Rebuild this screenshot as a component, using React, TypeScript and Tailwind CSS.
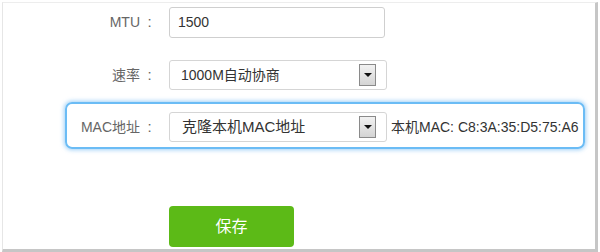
import React from "react";

const font = { fontFamily: '"Liberation Sans", "Noto Sans CJK SC", sans-serif' };

function Arrow() {
  return (
    <div className="absolute right-[10px] top-1/2 -translate-y-1/2 w-[17px] h-[22px] border border-[#8a8a8a] bg-gradient-to-b from-[#f2f2f2] to-[#d4d4d4] flex items-center justify-center">
      <div className="w-0 h-0 border-l-[4px] border-r-[4px] border-t-[4px] border-l-transparent border-r-transparent border-t-[#111]" />
    </div>
  );
}

function Label({ text }: { text: string }) {
  return (
    <div className="w-[92px] h-[30px] flex items-center justify-end text-[14px] text-[#666]">
      <span>{text}</span>
      <span className="w-[19px] text-center text-[15px]">:</span>
    </div>
  );
}

export default function App() {
  return (
    <div className="w-[600px] h-[252px] bg-white pt-[2px] pl-[2px] overflow-hidden" style={font}>
      <div className="w-[596px] h-[250px] border-t border-l border-t-[#ededed] border-l-[#e6e6e6] border-r-[3px] border-r-[#c6c6c6] border-b-[3px] border-b-[#c6c6c6]">
        {/* MTU */}
        <div className="flex items-center mt-[4px] ml-[64px]">
          <Label text="MTU" />
          <div className="ml-[10px] w-[216px] h-[31px] border border-[#cfcfcf] rounded-[3px] flex items-center pl-[8px] text-[14px] text-[#333]">
            1500
          </div>
        </div>
        {/* 速率 */}
        <div className="flex items-center mt-[22px] ml-[64px]">
          <Label text="速率" />
          <div className="ml-[10px] relative w-[218px] h-[30px] border border-[#d5d5d5] rounded-[3px] flex items-center pl-[11px] text-[14px] text-[#333]">
            1000M自动协商
            <Arrow />
          </div>
        </div>
        {/* MAC */}
        <div className="ml-[62px] mt-[12px] w-[520px] h-[47px] border-2 border-[#6bbcf5] rounded-[7px] shadow-[0_0_4px_1px_rgba(80,170,240,0.55)] flex items-start pt-[8px]">
          <Label text="MAC地址" />
          <div className="ml-[10px] relative w-[218px] h-[30px] border border-[#d5d5d5] rounded-[3px] flex items-center pl-[12px] text-[15px] text-[#333]">
            克隆本机MAC地址
            <Arrow />
          </div>
          <div className="ml-[4px] h-[30px] flex items-center text-[14px] text-[#333] whitespace-nowrap">
            本机MAC: C8:3A:35:D5:75:A6
          </div>
        </div>
        {/* Save */}
        <div className="ml-[166px] mt-[57px] w-[125px] h-[41px] rounded-[4px] bg-[#5cba17] flex items-center justify-center text-white text-[16px]">
          保存
        </div>
      </div>
    </div>
  );
}
